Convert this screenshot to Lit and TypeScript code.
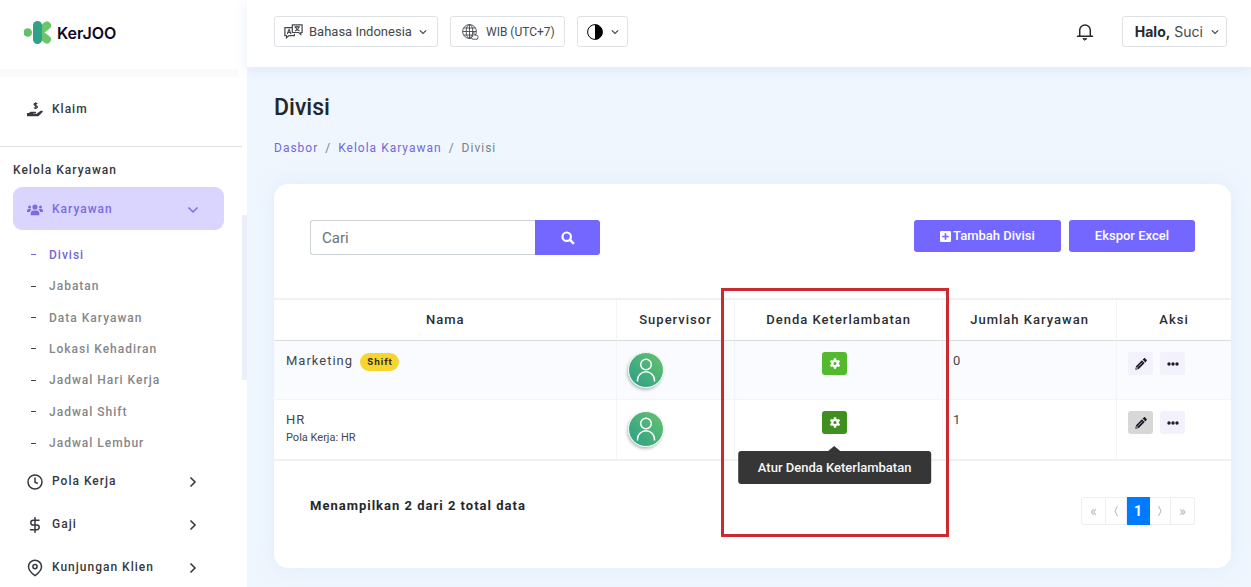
import { LitElement, html, svg, css, nothing } from "lit";
import { customElement, property } from "lit/decorators.js";
import { classMap } from "lit/directives/class-map.js";

const chevronDown = html`<svg class="chev" viewBox="0 0 10 10" width="10" height="10" fill="none" stroke="currentColor" stroke-width="1.2" aria-hidden="true"><path d="M1.8 3.3 5 6.5l3.2-3.2" /></svg>`;

const icons = {
  claim: html`<svg viewBox="0 0 16 16" width="16" height="16" aria-hidden="true"><path fill="currentColor" d="M0 11h1.900l1.700-1.200h4.900c.9 0 .9 1.400 0 1.400H6.400v.5h3.200l3.400-2.500c.9-.6 2.900-.4 2.900 0 0 .6-3 3.600-4.600 5.100H0z" /><path d="M10.300 1.900C9.800 1.200 7 1.100 7 2.600c0 1.400 3.400.7 3.400 2.300 0 1.500-3 1.500-3.500.5M8.700.3v6.800" fill="none" stroke="currentColor" stroke-width="1.200" /></svg>`,
  users: html`<svg viewBox="0 0 16 12" width="16" height="12" fill="currentColor" aria-hidden="true"><circle cx="8" cy="3" r="2.600" /><circle cx="2.500" cy="2.900" r="1.500" /><circle cx="13.500" cy="2.900" r="1.500" /><path d="M3.700 11.200V9.100C3.700 7.200 5 6.400 6.400 6.400h3.200c1.400 0 2.700.8 2.700 2.700v2.100zM0 8V6.600C0 5.500.8 5 1.700 5h1.700c.5 0 .9.200 1.200.5C3.600 6.100 3 7 2.900 8zM16 8V6.600C16 5.500 15.200 5 14.300 5h-1.700c-.5 0-.9.200-1.200.5 1 .6 1.600 1.500 1.700 2.500z" /></svg>`,
  clock: html`<svg viewBox="0 0 16 16" width="16" height="16" fill="none" stroke="currentColor" stroke-width="1.500" stroke-linecap="round" aria-hidden="true"><circle cx="8" cy="8" r="7" /><path d="M8 4v4.300l2.300 1" /></svg>`,
  dollar: html`<svg viewBox="0 0 16 16" width="16" height="16" fill="none" stroke="currentColor" stroke-width="1.500" stroke-linecap="round" aria-hidden="true"><path d="M8 .7v14.600M12 3.300H6.200c-3.200 0-3.200 4.700 0 4.700h3.600c3.200 0 3.200 4.700 0 4.700H3.500" /></svg>`,
  pin: html`<svg viewBox="0 0 16 18" width="16" height="18" fill="none" stroke="currentColor" stroke-width="1.500" aria-hidden="true"><path d="M14.500 7.700c0 4.300-6.500 8.900-6.500 8.900S1.500 12 1.500 7.700a6.500 6.500 0 0 1 13 0z" /><circle cx="8" cy="7.600" r="2.100" /></svg>`,
  translate: html`<svg viewBox="0 0 19 15" width="19" height="15" fill="none" stroke="currentColor" stroke-width="1.200" aria-hidden="true"><path d="M8 3.600H.9v8h1.600v2.200l2.500-2.200h5.400V9.800" /><path d="M8.300.9h9.800v7.600h-1.300v2L14.600 8.500H8.300z" /><path d="M3.200 10l1.900-4.500L7 10M3.800 8.500h2.600M10.500 2.900h5.300M13 1.900v1M15 3.100c-.5 2-2 3.200-4 3.900M11.500 3.300c.7 1.800 2 3 4 3.700" stroke-width="1.100" /></svg>`,
  globe: html`<svg viewBox="0 0 17 16" width="17" height="16" fill="none" stroke="currentColor" stroke-width=".9" aria-hidden="true"><circle cx="7.500" cy="7.500" r="6.900" /><ellipse cx="7.500" cy="7.500" rx="3.300" ry="6.900" /><path d="M7.500.6v13.800M.6 7.500h13.800M1.600 4h11.800M1.600 11h9" /><path fill="#fff" d="M10.400 15.200 9 12.500c-.3-.9.800-1 1.200-.3l.6.600V8.600c0-.9 1.200-.9 1.200 0v2.200l3 .6c1 .2 1.200.8 1 1.700l-.6 2.100z" /></svg>`,
  contrast: html`<svg viewBox="0 0 16 16" width="16" height="16" aria-hidden="true"><circle cx="8" cy="8" r="7.400" fill="#fff" stroke="#000" /><path d="M8 .5a7.500 7.500 0 0 1 0 15z" fill="#000" /></svg>`,
  bell: html`<svg viewBox="0 0 18 18" width="18" height="18" fill="none" stroke="currentColor" stroke-width="1.500" stroke-linejoin="round" stroke-linecap="round" aria-hidden="true"><path d="M1.500 13.200h15M3.700 13V7.200a5.300 5.300 0 0 1 10.600 0V13" /><path d="M7.200 15.700h3.600l-1.800 1.300z" fill="currentColor" stroke-width="1" /></svg>`,
  search: html`<svg viewBox="0 0 14 14" width="14" height="14" fill="none" stroke="currentColor" stroke-width="2.200" aria-hidden="true"><circle cx="5.700" cy="5.700" r="4.200" /><path d="M8.700 8.700l4.200 4.200" stroke-width="2.600" /></svg>`,
  plus: html`<svg viewBox="0 0 11 11" width="11" height="11" aria-hidden="true"><rect width="11" height="11" rx="1.300" fill="#fff" /><path d="M5.500 2.200v6.600M2.200 5.500h6.600" stroke="#7367ff" stroke-width="1.700" /></svg>`,
  gear: html`<svg viewBox="0 0 12 12" width="12" height="12" aria-hidden="true"><path fill="#fff" fill-rule="evenodd" d="M4.900.3h2.200l.3 1.600 1 .6 1.600-.6 1.100 1.900-1.300 1.100v1.200l1.300 1.100L10 9.100l-1.600-.6-1 .6-.3 1.600H4.900l-.3-1.600-1-.6-1.600.6L.9 7.200l1.300-1.100V4.900L.9 3.800 2 1.900l1.600.6 1-.6zM6 3.900a1.600 1.600 0 1 0 0 3.200 1.600 1.600 0 0 0 0-3.200z" /></svg>`,
  pencil: html`<svg viewBox="0 0 12 12" width="12" height="12" aria-hidden="true"><path fill="#1d1d2b" fill-rule="evenodd" d="M.3 11.700l.7-3.500 5.900-5.900L9.700 5.100 3.800 11zM1.700 8.800l-.4 1.900 1.900-.4zM7.600 1.600 8.900.4c.4-.4.900-.4 1.300 0l1.400 1.400c.4.400.4.900 0 1.300l-1.200 1.300z" /><path d="M3.200 8.600l4-4" stroke="#fff" stroke-width=".6" /></svg>`,
  dots: html`<svg viewBox="0 0 12 4" width="12" height="4" fill="#1d1d2b" aria-hidden="true"><circle cx="2" cy="2" r="1.700" /><circle cx="6" cy="2" r="1.700" /><circle cx="10" cy="2" r="1.700" /></svg>`,
};

@customElement("kj-sidebar")
export class KjSidebar extends LitElement {
  static styles = css`
    :host {
      display: grid;
      grid-template-columns: 1fr 5px;
      background: #fff;
      color: #36393f;
      overflow: hidden;
      font: 500 12px/20px Roboto, sans-serif;
    }
    a { color: inherit; text-decoration: none; }
    .brand { display: flex; align-items: center; gap: 5px; height: 69px; padding: 0 24px 4px; box-sizing: border-box; }
    .brand-name { font: 600 16px/24px Inter, sans-serif; color: #0d0926; }
    .shade { height: 8px; margin-right: 4px; background: #fafafa; }
    .row { display: grid; grid-template-columns: 16px 1fr 10px; gap: 9px; align-items: center; height: 43px; padding: 0 26px 0 14px; letter-spacing: 1px; box-sizing: border-box; }
    .row svg { justify-self: center; margin-top: 2px; }
    .row.active { background: #dad5ff; border-radius: 9px; color: #7d6be0; }
    nav { padding: 0 18px 0 13px; }
    .first { padding-top: 10px; padding-bottom: 16px; }
    hr { border: 0; border-top: 1px solid #dce3e2; margin: 0; }
    h2 { margin: 0; padding: 13px 0 7px; font: inherit; letter-spacing: 1px; }
    ul { list-style: none; display: grid; grid-auto-rows: 1fr; height: 220px; margin: 9px 0 0; padding: 0 0 0 18px; }
    li { display: flex; align-items: center; gap: 13px; color: #85878a; letter-spacing: 1px; }
    li::before { content: ""; width: 5px; height: 1px; background: #3d4045; }
    li.current { color: #7566d6; }
    li.current::before { background: #7566d6; }
    .track { padding-top: 215px; }
    .thumb { height: 165px; background: #edeefc; }
  `;

  render() {
    const subs = ["Divisi", "Jabatan", "Data Karyawan", "Lokasi Kehadiran", "Jadwal Hari Kerja", "Jadwal Shift", "Jadwal Lembur"];
    const groups: [string, unknown][] = [["Pola Kerja", icons.clock], ["Gaji", icons.dollar], ["Kunjungan Klien", icons.pin]];
    const right = html`<svg viewBox="0 0 10 12" width="10" height="12" fill="none" stroke="currentColor" stroke-width="1.600" aria-hidden="true"><path d="M2.500 1.500 7 6l-4.500 4.500" /></svg>`;
    return html`
      <div>
        <a class="brand" href="#">
          <svg viewBox="0 0 28 23" width="28" height="23" aria-hidden="true">
            <circle cx="3.700" cy="11.500" r="4.300" fill="#66bf6b" />
            <path d="M14 11.500 23 4.500M14 11.500l9 7" stroke="#6cc56b" stroke-width="8" stroke-linecap="round" />
            <rect x="9" y="0" width="9" height="23" rx="4.500" fill="#2fa286" />
          </svg>
          <span class="brand-name">KerJOO</span>
        </a>
        <div class="shade"></div>
        <nav class="first"><a class="row" href="#">${icons.claim}<span>Klaim</span></a></nav>
        <hr />
        <nav>
          <h2>Kelola Karyawan</h2>
          <a class="row active" href="#">${icons.users}<span>Karyawan</span>
            <svg viewBox="0 0 12 10" width="12" height="10" fill="none" stroke="currentColor" stroke-width="1.500" aria-hidden="true"><path d="M1.500 2.500 6 7l4.500-4.500" /></svg></a>
          <ul>${subs.map((s, i) => html`<li class=${classMap({ current: i === 0 })}><a href="#">${s}</a></li>`)}</ul>
          ${groups.map(([name, icon]) => html`<a class="row" href="#">${icon}<span>${name}</span>${right}</a>`)}
        </nav>
      </div>
      <div class="track"><div class="thumb"></div></div>
    `;
  }
}

@customElement("kj-topbar")
export class KjTopbar extends LitElement {
  static styles = css`
    :host { display: flex; align-items: center; gap: 12px; height: 67px; padding: 0 24px 4px 27px; box-sizing: border-box; background: #fff; box-shadow: 0 2px 12px rgba(120, 150, 190, 0.16); color: #45484c; }
    .box { display: flex; align-items: center; height: 31px; padding: 0 9px; box-sizing: border-box; background: #fff; border: 1px solid #dfe2e4; border-radius: 3px; font: 400 12px/20px Roboto, sans-serif; color: inherit; }
    .lang { gap: 6px; }
    select { appearance: none; border: 0; padding: 0; background: none; color: inherit; font: 400 13px/20px Roboto, sans-serif; }
    .zone { gap: 7px; padding: 0 9px 0 11px; }
    .theme { gap: 7px; padding: 0 7px 0 9px; }
    .spacer { flex: 1; }
    .bell { display: flex; margin-right: 16px; padding: 0; border: 0; background: none; color: #25282c; }
    .user { gap: 7px; padding: 0 6px 0 12px; font: 400 14px/20px Inter, sans-serif; }
    b { color: #25282c; font-weight: 700; }
  `;

  render() {
    return html`
      <label class="box lang">${icons.translate}
        <select aria-label="Bahasa"><option>Bahasa Indonesia</option></select>${chevronDown}
      </label>
      <button class="box zone">${icons.globe}<span>WIB (UTC+7)</span></button>
      <button class="box theme" aria-label="Tema" aria-haspopup="menu">${icons.contrast}${chevronDown}</button>
      <span class="spacer"></span>
      <button class="bell" aria-label="Notifikasi">${icons.bell}</button>
      <button class="box user" aria-haspopup="menu"><span><b>Halo,</b> Suci</span>${chevronDown}</button>
    `;
  }
}

interface Division {
  name: string;
  shift: boolean;
  pattern?: string;
  employees: number;
  hovered: boolean;
}

@customElement("kj-division-table")
export class KjDivisionTable extends LitElement {
  @property({ attribute: false }) rows: Division[] = [];

  static styles = css`
    :host { display: block; }
    table { width: 100%; table-layout: fixed; border-collapse: separate; border-spacing: 0; border-top: 2px solid #eff1f3; border-bottom: 2px solid #eff1f3; font: 400 13px/18px Roboto, sans-serif; letter-spacing: 1px; color: #44474b; }
    .c-name { width: 35.7%; }
    .c-sup { width: 12.4%; }
    .c-fine { width: 21.7%; }
    .c-count { width: 18.2%; }
    .c-act { width: 12%; }
    th { position: relative; height: 40px; padding: 0; font-weight: 500; color: #2b2e32; border-bottom: 1px solid #dadddf; border-left: 1px solid #f2f4f6; }
    td { height: 59px; box-sizing: border-box; padding: 11px 11px 0; vertical-align: top; border-left: 1px solid #f2f4f6; }
    th:first-child, td:first-child { border-left-color: transparent; }
    .striped td { background: #fafbfe; border-bottom: 1px solid #f2f5f7; }
    .person { display: block; border-radius: 50%; box-shadow: -1px 2px 3px rgba(60, 80, 80, 0.35); }
    td.num { padding-left: 10px; }
    .badge { display: inline-block; margin-left: 3px; padding: 0 6px 0 7px; border-radius: 9px; background: #f6d530; color: #2b2a18; font: 700 9px/18px Inter, sans-serif; }
    .meta { font-size: 11px; letter-spacing: 0; }
    .fine { text-align: center; }
    .anchor { position: relative; display: inline-block; margin-right: 8px; }
    button { display: flex; align-items: center; justify-content: center; width: 25px; height: 23px; padding: 0; border: 0; border-radius: 3px; background: #f2f1fc; }
    .gear { background: #54ba2d; }
    .gear.hovered { background: #3f901f; }
    .edit.hovered { background: #d7d7d7; }
    .actions { display: flex; gap: 7px; }
    .tip { position: absolute; z-index: 2; top: 40px; left: 50%; transform: translateX(-50%); padding: 0 20px; border-radius: 3px; background: #363636; color: #f7f7f7; font: 500 13px/33px Roboto, sans-serif; letter-spacing: 0; white-space: nowrap; }
    .tip::before { content: ""; position: absolute; top: -5px; left: 50%; margin-left: -6px; border: 6px solid transparent; border-top: 0; border-bottom: 5px solid #363636; }
    .marker { position: absolute; z-index: 3; top: -12px; left: -14px; right: -7px; height: 243px; border: 3px solid #cb2a30; pointer-events: none; }
  `;

  private avatar(id: number) {
    return html`<svg class="person" viewBox="0 0 36 36" width="36" height="36" role="img" aria-label="Supervisor">
      <defs><linearGradient id="g${id}" x1="0" y1="1" x2="1" y2="0"><stop offset=".2" stop-color="#35a683" /><stop offset="1" stop-color="#69c26d" /></linearGradient></defs>
      <circle cx="18" cy="18" r="17.500" fill="url(#g${id})" stroke="#f4faf8" />
      <g fill="none" stroke="#fff" stroke-width="1.500"><circle cx="18" cy="12.500" r="5.300" /><path d="M9.500 29.500v-1.300a8.500 8.500 0 0 1 17 0v1.300" /></g>
    </svg>`;
  }

  render() {
    return html`
      <table>
        <colgroup><col class="c-name" /><col class="c-sup" /><col class="c-fine" /><col class="c-count" /><col class="c-act" /></colgroup>
        <thead>
          <tr><th>Nama</th><th>Supervisor</th><th>Denda Keterlambatan<span class="marker"></span></th><th>Jumlah Karyawan</th><th>Aksi</th></tr>
        </thead>
        <tbody>
          ${this.rows.map((r, i) => html`
            <tr class=${classMap({ striped: i % 2 === 0 })}>
              <td>${r.name} ${r.shift ? html`<span class="badge">Shift</span>` : nothing}
                ${r.pattern ? html`<div class="meta">Pola Kerja: ${r.pattern}</div>` : nothing}</td>
              <td>${this.avatar(i)}</td>
              <td class="fine"><span class="anchor">
                <button class=${classMap({ gear: true, hovered: r.hovered })} aria-label="Atur Denda Keterlambatan">${icons.gear}</button>
                ${r.hovered ? html`<span class="tip" role="tooltip">Atur Denda Keterlambatan</span>` : nothing}
              </span></td>
              <td class="num">${r.employees}</td>
              <td><div class="actions">
                <button class=${classMap({ edit: true, hovered: r.hovered })} aria-label="Ubah">${icons.pencil}</button>
                <button aria-label="Lainnya">${icons.dots}</button>
              </div></td>
            </tr>`)}
        </tbody>
      </table>
    `;
  }
}

@customElement("app-root")
export class AppRoot extends LitElement {
  static styles = css`
    :host { display: grid; grid-template-columns: 247px minmax(0, 1fr); height: 100vh; overflow: hidden; background: #eff6fe; font-family: Roboto, sans-serif; }
    main { padding: 27px 20px 19px 27px; }
    h1 { margin: 0; font: 500 23px/28px Roboto, sans-serif; color: #23272b; }
    .crumbs { display: flex; gap: 7px; margin: 16px 0 26px; font: 400 12px/20px Roboto, sans-serif; letter-spacing: 1px; color: #77828a; }
    .crumbs a { color: #7468d8; text-decoration: none; }
    .card { background: #fff; border-radius: 14px; box-shadow: 0 0 20px rgba(150, 170, 220, 0.15); }
    .tools { display: flex; justify-content: space-between; align-items: flex-start; padding: 36px 36px 43px; }
    .search { display: flex; width: 290px; height: 35px; }
    input { flex: 1; min-width: 0; box-sizing: border-box; padding: 0 11px; border: 1px solid #ced4d8; border-right: 0; border-radius: 3px 0 0 3px; background: #fff; font: 400 15px/20px Roboto, sans-serif; }
    input::placeholder { color: #6c7277; opacity: 1; }
    button { display: flex; align-items: center; justify-content: center; gap: 2px; border: 0; background: #7367ff; color: #fff; font: 500 13px/20px Roboto, sans-serif; }
    .go { width: 65px; padding: 0; border-radius: 0 3px 3px 0; }
    .buttons { display: flex; gap: 8px; }
    .buttons button { height: 32px; padding: 0 26px; border-radius: 3px; }
    footer { display: flex; justify-content: space-between; align-items: flex-start; padding: 36px 36px 43px; }
    footer p { margin: 0; font: 700 13px/18px Roboto, sans-serif; letter-spacing: 1px; color: #25282b; }
    .pages { display: flex; height: 28px; }
    .pages button { padding: 0; width: 21px; box-sizing: border-box; background: #fff; color: #b4b8bb; border: 1px solid #eceef0; border-left: 0; font: 400 14px/20px Roboto, sans-serif; }
    .pages .edge { width: 24px; }
    .pages .edge:first-child { width: 25px; border-left: 1px solid #eceef0; border-radius: 3px 0 0 3px; }
    .pages .edge:last-child { border-radius: 0 3px 3px 0; }
    .pages .now { width: 23px; background: #007bff; border-color: #007bff; color: #fff; font-weight: 700; }
  `;

  private rows: Division[] = [
    { name: "Marketing", shift: true, employees: 0, hovered: false },
    { name: "HR", shift: false, pattern: "HR", employees: 1, hovered: true },
  ];

  render() {
    const arrow = (d: string) => html`<svg viewBox="0 0 6 12" width="6" height="12" fill="none" stroke="currentColor" aria-hidden="true">${svg`<path d=${d} />`}</svg>`;
    return html`
      <kj-sidebar></kj-sidebar>
      <div>
        <kj-topbar></kj-topbar>
        <main>
          <h1>Divisi</h1>
          <nav class="crumbs" aria-label="Breadcrumb"><a href="#">Dasbor</a><span>/</span><a href="#">Kelola Karyawan</a><span>/</span><span>Divisi</span></nav>
          <section class="card">
            <div class="tools">
              <form class="search" @submit=${(e: Event) => e.preventDefault()}>
                <input type="text" placeholder="Cari" aria-label="Cari" /><button class="go" aria-label="Cari">${icons.search}</button>
              </form>
              <div class="buttons"><button>${icons.plus}<span>Tambah Divisi</span></button><button>Ekspor Excel</button></div>
            </div>
            <kj-division-table .rows=${this.rows}></kj-division-table>
            <footer>
              <p>Menampilkan 2 dari 2 total data</p>
              <div class="pages">
                <button class="edge" aria-label="Halaman pertama">«</button>
                <button aria-label="Sebelumnya">${arrow("M4.500 1 2 6l2.500 5")}</button>
                <button class="now">1</button>
                <button aria-label="Berikutnya">${arrow("M1.500 1 4 6l-2.500 5")}</button>
                <button class="edge" aria-label="Halaman terakhir">»</button>
              </div>
            </footer>
          </section>
        </main>
      </div>
    `;
  }
}
